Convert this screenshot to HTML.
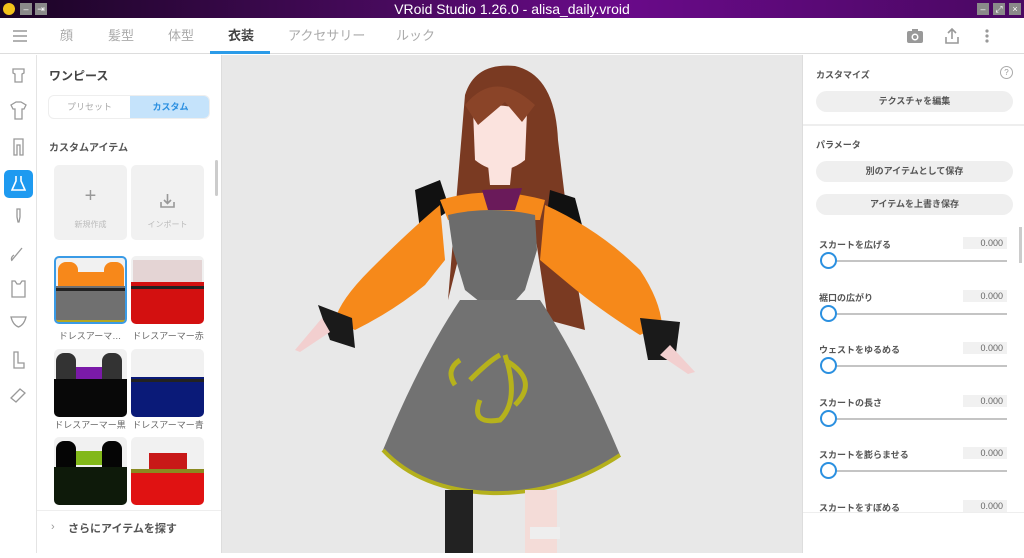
<!DOCTYPE html>
<html><head><meta charset="utf-8"><style>
*{margin:0;padding:0;box-sizing:border-box}
body{width:1024px;height:553px;overflow:hidden;background:#fff;font-family:"Liberation Sans","Noto Sans CJK JP",sans-serif;position:relative;color:#444}
.abs{position:absolute}
#title{left:0;top:0;width:1024px;height:18px;background:linear-gradient(90deg,#1a0424 0%,#4a0a60 40%,#6a0a8a 60%,#4a0862 100%);color:#fff;font-size:14px;text-align:center;line-height:18px}
.wb{position:absolute;top:3px;width:12px;height:12px;background:#8a8a8a;color:#fff;font-size:9px;line-height:12px;text-align:center}
#bar{left:0;top:18px;width:1024px;height:36px;border-bottom:1px solid #ddd;background:#fff}
.tab{position:absolute;top:0;height:36px;line-height:35px;font-size:13px;color:#aaa}
#rail{left:0;top:55px;width:37px;height:498px;border-right:1px solid #e4e4e4;background:#fff}
#lp{left:37px;top:55px;width:185px;height:498px;background:#fff}
#vp{left:222px;top:55px;width:580px;height:498px;background:#e8e8e8}
#rp{left:802px;top:55px;width:222px;height:498px;background:#fff;border-left:1px solid #ddd}
.btn{position:absolute;left:13px;width:197px;height:21px;border-radius:11px;background:#efefef;font-size:9px;font-weight:bold;text-align:center;line-height:21px;color:#555}
.lab{position:absolute;left:16px;font-size:9px;font-weight:bold;color:#555}
.val{position:absolute;left:160px;width:44px;height:12px;background:#f1f1f1;font-size:9px;text-align:right;padding-right:4px;line-height:12px;color:#666}
.trk{position:absolute;left:26px;width:178px;height:2px;background:#c4c4c4}
.knob{position:absolute;left:17px;width:17px;height:17px;border-radius:50%;border:2px solid #2b90e0;background:#fff}
.tile{position:absolute;width:73px;height:68px;border-radius:5px;background:#f1f1f1;overflow:hidden}
.tl{position:absolute;font-size:9px;color:#666;width:80px;text-align:center}
</style></head><body>
<div id="title" class="abs">VRoid Studio 1.26.0 - alisa_daily.vroid
<div style="position:absolute;left:3px;top:3px;width:12px;height:12px;border-radius:50%;background:#f2c21a"></div>
<div class="wb" style="left:20px">–</div><div class="wb" style="left:35px">⇥</div>
<div class="wb" style="left:977px">–</div><div class="wb" style="left:993px">⤢</div><div class="wb" style="left:1009px">×</div>
</div>
<div id="bar" class="abs">
<svg class="abs" style="left:13px;top:12px" width="14" height="12"><path d="M0 1h14M0 6h14M0 11h14" stroke="#999" stroke-width="1.4"/></svg>
<div class="tab" style="left:60px">顔</div>
<div class="tab" style="left:108px">髪型</div>
<div class="tab" style="left:168px">体型</div>
<div class="tab" style="left:228px;color:#444;font-weight:bold">衣装</div>
<div style="position:absolute;left:210px;top:33px;width:60px;height:3px;background:#2b9be8"></div>
<div class="tab" style="left:288px">アクセサリー</div>
<div class="tab" style="left:396px">ルック</div>
<svg class="abs" style="left:906px;top:10px" width="18" height="16" viewBox="0 0 18 16"><rect x="1" y="3" width="16" height="12" rx="2" fill="#999"/><rect x="6" y="1" width="6" height="3" fill="#999"/><circle cx="9" cy="9" r="3.5" fill="#fff"/><circle cx="9" cy="9" r="2" fill="#999"/></svg>
<svg class="abs" style="left:944px;top:9px" width="16" height="18" viewBox="0 0 16 18" fill="none" stroke="#999" stroke-width="1.6"><path d="M8 12V2M4 6l4-4 4 4M2 10v6h12v-6"/></svg>
<svg class="abs" style="left:984px;top:10px" width="6" height="16"><circle cx="3" cy="3" r="1.6" fill="#999"/><circle cx="3" cy="8" r="1.6" fill="#999"/><circle cx="3" cy="13" r="1.6" fill="#999"/></svg>
</div>
<div id="rail" class="abs">
<svg class="abs" style="left:0;top:0" width="37" height="360" fill="none" stroke="#999" stroke-width="1.3">
<path d="M13 14h11v4l-2 1v8h-7v-8l-2-1z"/>
<path d="M11 50l5-3h5l5 3-2 4h-2v10h-7V54h-2z"/>
<path d="M14 84h9v16h-3v-10h-3v10h-3z"/>
<path d="M17 154h3v8l-1 5h-1l-1-5z"/>
<path d="M12 205l10-12M14 200c-3 2-3 4-2 6"/>
<path d="M12 226h3l2 3h3l2-3h3v16H12z"/>
<path d="M11 262h15q-2 8-7.5 10Q13 270 11 262z"/>
<path d="M14 297v16h10v-5h-6v-11z"/>
<path d="M11 343l9-9 5 4-9 9z"/>
</svg>
<div style="position:absolute;left:4px;top:115px;width:29px;height:28px;border-radius:5px;background:#1e9af0"></div>
<svg class="abs" style="left:11px;top:120px" width="15" height="18" viewBox="0 0 15 18" fill="none" stroke="#fff" stroke-width="1.6"><path d="M5 1v5L1 15h13L10 6V1"/></svg>
</div>
<div id="lp" class="abs">
<div style="position:absolute;left:12px;top:12px;font-size:12px;font-weight:bold;color:#444">ワンピース</div>
<div style="position:absolute;left:11px;top:40px;width:162px;height:24px;border:1px solid #eee;border-radius:6px;overflow:hidden">
<div style="position:absolute;left:0;top:0;width:81px;height:24px;font-size:9px;color:#aaa;text-align:center;line-height:22px">プリセット</div>
<div style="position:absolute;left:81px;top:0;width:81px;height:24px;background:#c5e3fb;font-size:9px;font-weight:bold;color:#2b8fe0;text-align:center;line-height:22px">カスタム</div></div>
<div style="position:absolute;left:12px;top:84px;font-size:10px;font-weight:bold;color:#555">カスタムアイテム</div>
<div style="position:absolute;left:178px;top:105px;width:3px;height:36px;background:#ccc;border-radius:2px"></div>
<div class="tile" style="left:17px;top:110px;height:75px"><div style="position:absolute;width:100%;top:20px;text-align:center;font-size:20px;color:#999">+</div><div style="position:absolute;width:100%;top:54px;text-align:center;font-size:8px;color:#bbb">新規作成</div></div>
<div class="tile" style="left:94px;top:110px;height:75px"><svg class="abs" style="left:29px;top:28px" width="15" height="15" fill="none" stroke="#999" stroke-width="1.6"><path d="M7.5 1v9M4 7l3.5 3.5L11 7M1 9v5h13V9"/></svg><div style="position:absolute;width:100%;top:54px;text-align:center;font-size:8px;color:#bbb">インポート</div></div>

<div class="tile" style="left:17px;top:201px;border:2px solid #3a9be6">
<div style="position:absolute;left:2px;top:4px;width:20px;height:24px;background:#f7881a;border-radius:8px 8px 0 0"></div>
<div style="position:absolute;left:48px;top:4px;width:20px;height:24px;background:#f7881a;border-radius:8px 8px 0 0"></div>
<div style="position:absolute;left:22px;top:14px;width:26px;height:14px;background:#f7881a"></div>
<div style="position:absolute;left:0;top:28px;width:73px;height:40px;background:#707070"></div>
<div style="position:absolute;left:0;top:30px;width:73px;height:3px;background:#222"></div>
<div style="position:absolute;left:0;top:62px;width:73px;height:3px;background:#b5a722"></div></div>
<div class="tile" style="left:94px;top:201px">
<div style="position:absolute;left:2px;top:4px;width:69px;height:24px;background:#e4d4d4"></div>
<div style="position:absolute;left:0;top:26px;width:73px;height:42px;background:#d31010"></div>
<div style="position:absolute;left:0;top:30px;width:73px;height:3px;background:#222"></div></div>
<div class="tl" style="left:13px;top:274px">ドレスアーマ…</div>
<div class="tl" style="left:91px;top:274px">ドレスアーマー赤</div>

<div class="tile" style="left:17px;top:294px">
<div style="position:absolute;left:2px;top:4px;width:20px;height:26px;background:#333;border-radius:8px 8px 0 0"></div>
<div style="position:absolute;left:48px;top:4px;width:20px;height:26px;background:#333;border-radius:8px 8px 0 0"></div>
<div style="position:absolute;left:22px;top:18px;width:26px;height:12px;background:#7a1aa8"></div>
<div style="position:absolute;left:0;top:30px;width:73px;height:38px;background:#080808"></div></div>
<div class="tile" style="left:94px;top:294px">
<div style="position:absolute;left:0;top:28px;width:73px;height:40px;background:#0a1a78"></div>
<div style="position:absolute;left:0;top:30px;width:73px;height:3px;background:#222"></div></div>
<div class="tl" style="left:13px;top:363px">ドレスアーマー黒</div>
<div class="tl" style="left:91px;top:363px">ドレスアーマー青</div>

<div class="tile" style="left:17px;top:382px">
<div style="position:absolute;left:2px;top:4px;width:20px;height:26px;background:#050505;border-radius:8px 8px 0 0"></div>
<div style="position:absolute;left:48px;top:4px;width:20px;height:26px;background:#050505;border-radius:8px 8px 0 0"></div>
<div style="position:absolute;left:22px;top:14px;width:26px;height:14px;background:#82b81a"></div>
<div style="position:absolute;left:0;top:30px;width:73px;height:38px;background:#0e1a0a"></div></div>
<div class="tile" style="left:94px;top:382px">
<div style="position:absolute;left:18px;top:16px;width:38px;height:16px;background:#c81818"></div>
<div style="position:absolute;left:0;top:32px;width:73px;height:4px;background:#8a8a20"></div>
<div style="position:absolute;left:0;top:36px;width:73px;height:32px;background:#e01212"></div></div>
<div style="position:absolute;left:0;top:455px;width:185px;height:43px;background:#fff;border-top:1px solid #eee"></div>
<div style="position:absolute;left:14px;top:466px;font-size:11px;color:#999">›</div>
<div style="position:absolute;left:31px;top:465px;font-size:11px;font-weight:bold;color:#555">さらにアイテムを探す</div>
</div>
<div class="abs" style="left:221px;top:55px;width:1px;height:498px;background:#ddd"></div>
<div id="vp" class="abs">
<svg width="580" height="498" viewBox="222 55 580 498">
<path d="M465 95 Q475 62 515 66 Q555 75 558 140 L570 240 L585 330 L548 320 L530 200 L472 200 L458 260 L448 300 Z" fill="#7a3a22"/>
<path d="M473 110 Q500 100 527 112 L525 160 Q500 180 475 160 Z" fill="#fbe3de"/>
<path d="M465 105 Q495 68 535 105 L522 122 L505 102 L478 125 Z" fill="#8a4428"/>
<path d="M488 165 L512 165 L510 185 L490 185 Z" fill="#fbe3de"/>
<path d="M415 190 L440 180 L450 210 L420 230 Z" fill="#111"/><path d="M550 190 L575 198 L582 225 L545 230 Z" fill="#111"/>
<path d="M440 200 Q490 185 545 200 L540 220 L448 220 Z" fill="#f6891a"/>
<path d="M482 190 L522 188 L515 210 L488 210 Z" fill="#6a1a5a"/>
<path d="M440 205 Q410 230 370 270 Q340 300 335 320 L355 330 Q395 310 425 285 L445 260 Z" fill="#f6891a"/>
<path d="M545 205 Q600 230 640 270 Q660 300 662 325 L640 335 Q600 310 570 285 L540 260 Z" fill="#f6891a"/>
<path d="M318 305 L352 318 L355 348 L330 340 Z" fill="#1a1a1a"/><path d="M640 318 L680 322 L675 360 L648 360 Z" fill="#1a1a1a"/>
<path d="M322 318 L295 350 L300 352 L330 332 Z" fill="#f2cfcf"/><path d="M670 345 L695 372 L688 374 L660 355 Z" fill="#f2cfcf"/>
<path d="M448 215 Q490 205 535 215 L537 250 L525 290 L500 318 L465 290 L453 250 Z" fill="#6c6c6c"/>
<path d="M460 300 L540 300 Q580 360 620 455 Q560 495 490 493 Q420 490 383 450 Q420 360 460 300 Z" fill="#727272"/>
<path d="M383 450 Q420 490 490 493 Q560 495 620 455" fill="none" stroke="#b4b01c" stroke-width="4"/>
<path d="M460 360 Q445 370 455 385 M470 380 Q490 360 500 355 M505 355 Q520 400 500 420 Q470 425 480 400 M505 360 Q540 380 515 405" fill="none" stroke="#b6b21c" stroke-width="5"/>
<rect x="445" y="490" width="28" height="63" fill="#222"/><rect x="525" y="490" width="32" height="63" fill="#f4dcd8"/>
<rect x="530" y="527" width="30" height="12" fill="#eee"/>
</svg>
</div>
<div id="rp" class="abs">
<div style="position:absolute;left:13px;top:13px;font-size:9px;font-weight:bold;color:#555">カスタマイズ</div>
<div style="position:absolute;left:197px;top:11px;width:13px;height:13px;border:1px solid #aaa;border-radius:50%;font-size:8px;color:#999;text-align:center;line-height:11px">?</div>
<div class="btn" style="top:36px">テクスチャを編集</div>
<div style="position:absolute;left:0;top:69px;width:222px;height:2px;background:#eee"></div>
<div style="position:absolute;left:13px;top:83px;font-size:9px;font-weight:bold;color:#555">パラメータ</div>
<div class="btn" style="top:106px">別のアイテムとして保存</div>
<div class="btn" style="top:139px">アイテムを上書き保存</div>
<div style="position:absolute;left:216px;top:172px;width:3px;height:36px;background:#ccc"></div>
<div class="lab" style="top:183px">スカートを広げる</div><div class="val" style="top:182px">0.000</div><div class="trk" style="top:205px"></div><div class="knob" style="top:197px"></div>
<div class="lab" style="top:236px">裾口の広がり</div><div class="val" style="top:235px">0.000</div><div class="trk" style="top:258px"></div><div class="knob" style="top:250px"></div>
<div class="lab" style="top:288px">ウェストをゆるめる</div><div class="val" style="top:287px">0.000</div><div class="trk" style="top:310px"></div><div class="knob" style="top:302px"></div>
<div class="lab" style="top:341px">スカートの長さ</div><div class="val" style="top:340px">0.000</div><div class="trk" style="top:363px"></div><div class="knob" style="top:355px"></div>
<div class="lab" style="top:393px">スカートを膨らませる</div><div class="val" style="top:392px">0.000</div><div class="trk" style="top:415px"></div><div class="knob" style="top:407px"></div>
<div class="lab" style="top:446px">スカートをすぼめる</div><div class="val" style="top:445px">0.000</div>
<div style="position:absolute;left:0;top:457px;width:222px;height:41px;background:#fff;border-top:1px solid #eee"></div>
</div>
</body></html>
